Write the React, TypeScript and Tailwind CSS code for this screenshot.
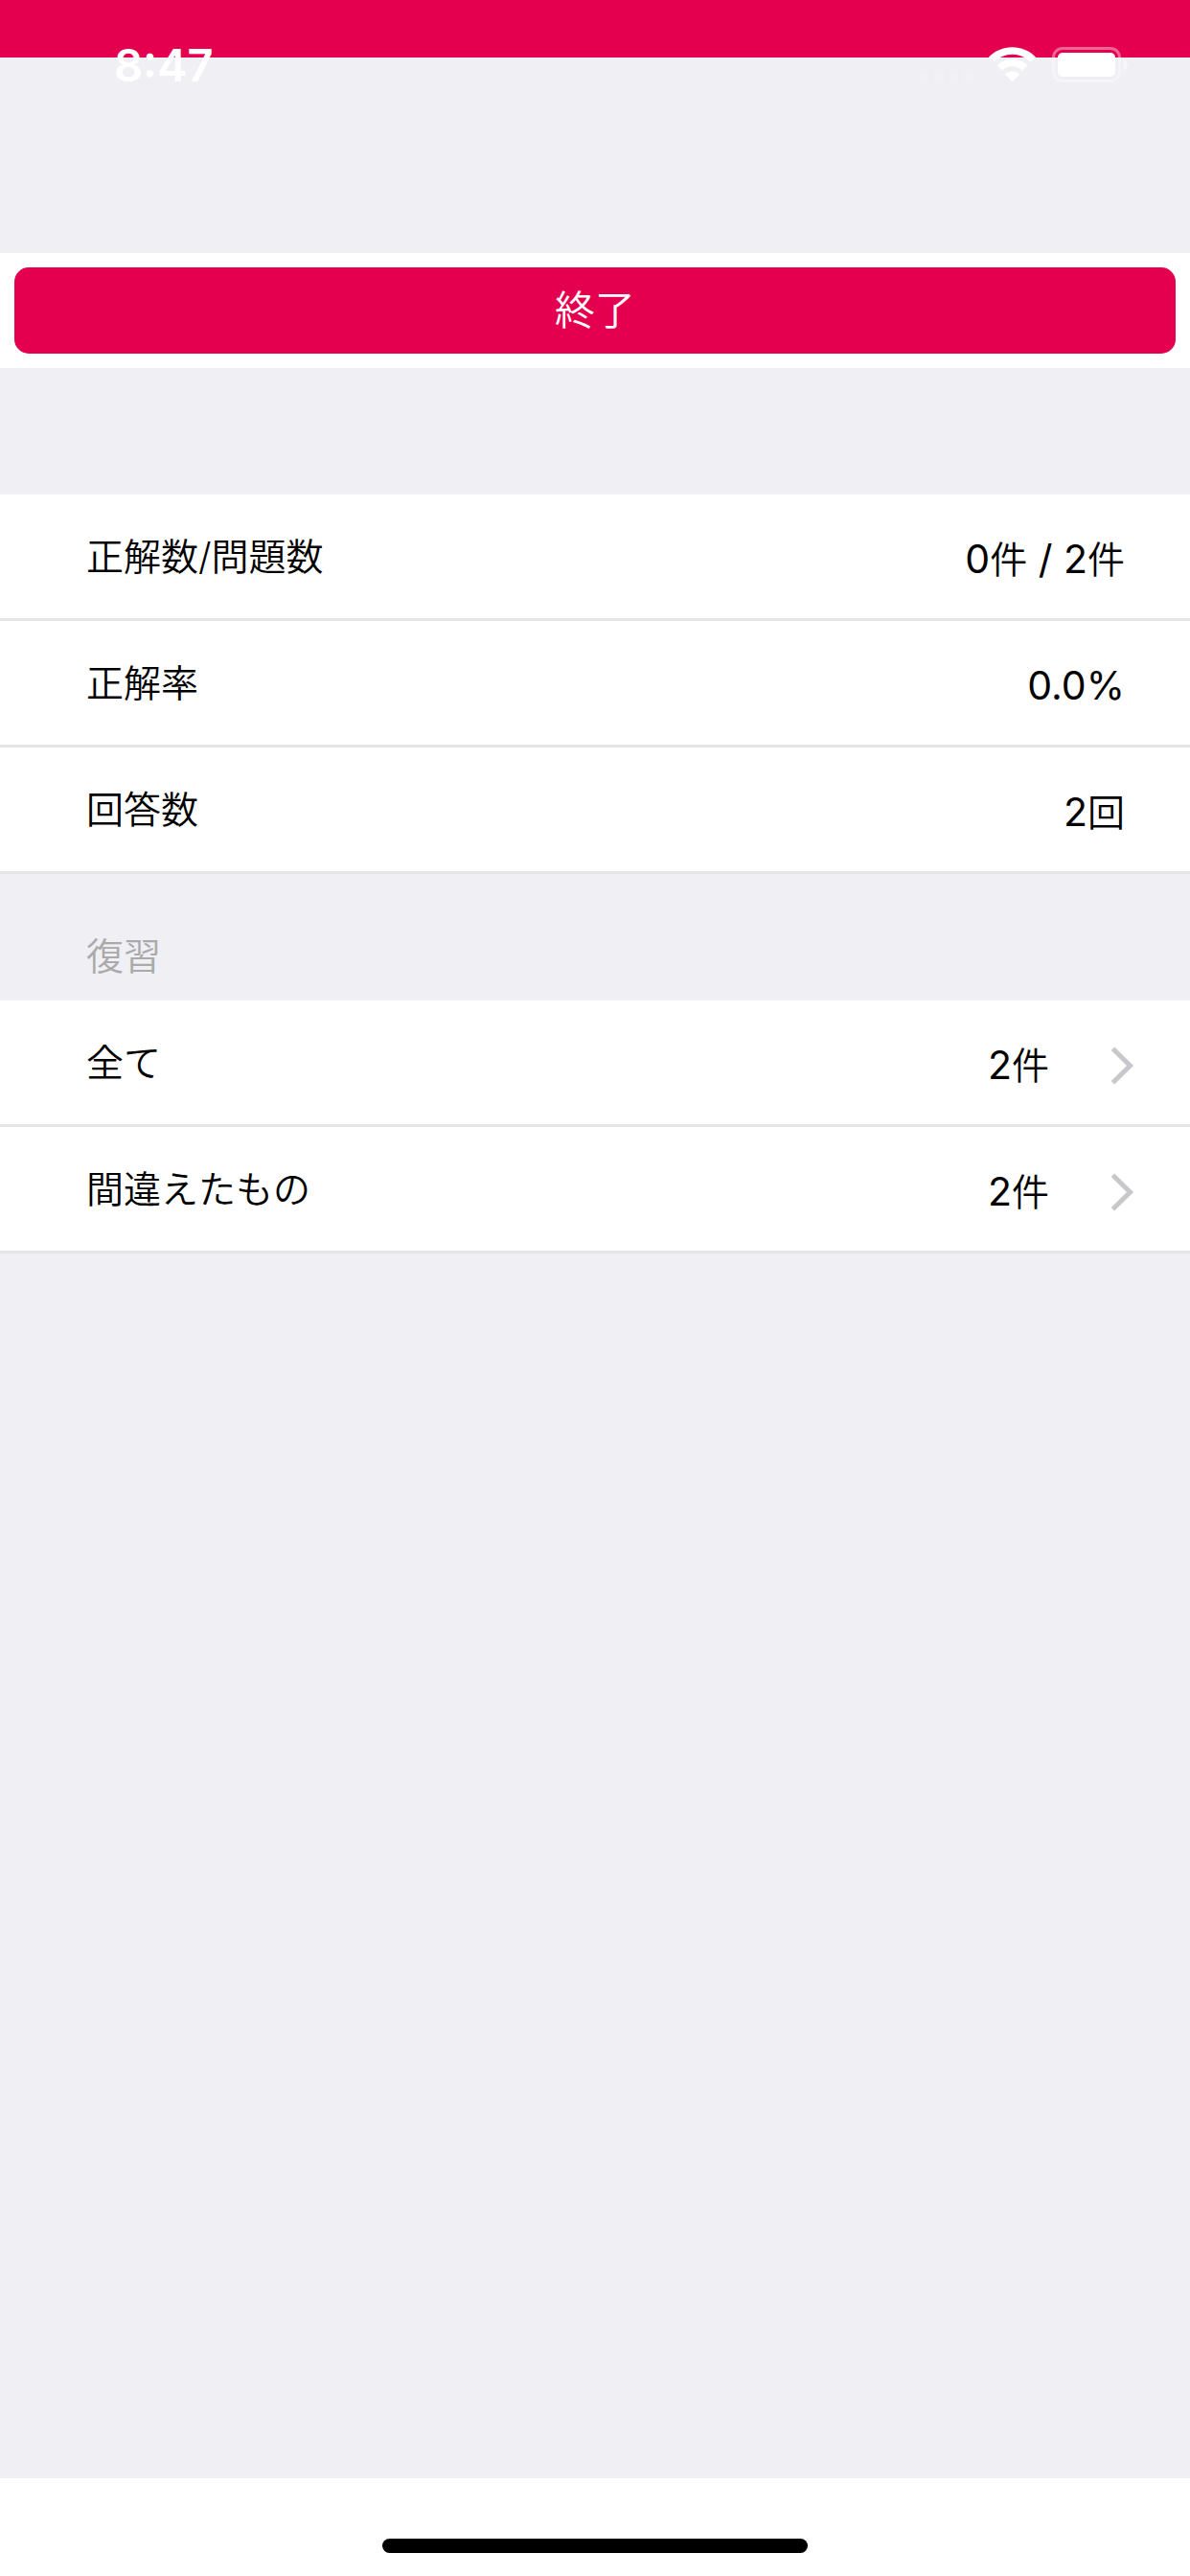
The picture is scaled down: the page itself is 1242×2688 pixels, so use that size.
import type { ReactNode } from "react";

const stats = [
  { label: "正解数/問題数", value: <><Num>0</Num>件<Num> / 2</Num>件</> },
  { label: "正解率", value: <Num>0.0%</Num> },
  { label: "回答数", value: <><Num>2</Num>回</> },
];

const reviews = [
  { label: "全て", count: 2 },
  { label: "間違えたもの", count: 2 },
];

function Num({ children }: { children: ReactNode }) {
  return <span className="text-[41px] font-normal whitespace-pre">{children}</span>;
}

function StatusBar() {
  return (
    <div className="absolute inset-x-0 top-0 flex h-[132px] items-start justify-between pt-10 pr-[64px] pl-[119px] text-white">
      <span className="text-[47px] leading-[56px] font-semibold">8:47</span>
      <div className="flex pt-2">
        <svg className="mt-[26px] h-[12px] w-[60px]" viewBox="0 0 60 12" fill="currentColor" fillOpacity="0.2" aria-hidden="true">
          <rect x="1" y="1" width="10" height="10" rx="3" />
          <rect x="16" y="1" width="10" height="10" rx="3" />
          <rect x="31" y="1" width="10" height="10" rx="3" />
          <rect x="46" y="1" width="10" height="10" rx="3" />
        </svg>
        <svg className="ml-3 h-[38px] w-[51px]" viewBox="0 0 51 38" fill="currentColor" aria-label="Wi-Fi" role="img">
          <path d="M1 11.4C7.6 4.9 16.200 1.200 25.500 1.200S43.400 4.900 50 11.400L44.600 16.800C39.500 11.800 32.800 8.800 25.500 8.800S11.500 11.800 6.400 16.800Z" />
          <path d="M9.600 20.200C13.800 16.100 19.400 13.700 25.500 13.700S37.200 16.100 41.400 20.200L36 25.600C33.200 22.900 29.500 21.300 25.500 21.300S17.800 22.900 15 25.600Z" />
          <path d="M18.400 29C20.200 27.200 22.700 26.200 25.500 26.200S30.800 27.200 32.600 29C33 29.400 33 29.900 32.600 30.300L26.200 36.700C25.800 37.100 25.200 37.100 24.800 36.700L18.400 30.300C18 29.900 18 29.400 18.400 29Z" />
        </svg>
        <svg className="ml-4 h-[40px] w-[80px]" viewBox="0 0 80 40" fill="none" aria-label="Battery" role="img">
          <rect x="1.500" y="2.500" width="69" height="34" rx="9.500" stroke="currentColor" strokeOpacity="0.4" strokeWidth="3" />
          <rect x="6" y="7" width="60" height="25" rx="5" fill="currentColor" />
          <path d="M74 13.500C77.600 15 79 17 79 19.600S77.600 24.500 74 26Z" fill="currentColor" fillOpacity="0.45" />
        </svg>
      </div>
    </div>
  );
}

function Chevron() {
  return (
    <svg className="mt-[6px] ml-[64px] h-[40px] w-[26px]" viewBox="0 0 26 40" fill="none" stroke="#c7c7cc" strokeWidth="5" aria-hidden="true">
      <path d="M2.500 2.300 20.500 20 2.500 37.700" />
    </svg>
  );
}

export default function App() {
  return (
    <div className="relative flex min-h-screen flex-col bg-[#efeff4] font-['Inter','Noto_Sans_CJK_JP',sans-serif] text-[39px] leading-[48px] font-[350] text-black" lang="ja">
      <header className="h-[60px] bg-[#e5004f]" />
      <StatusBar />
      <main className="flex grow flex-col pt-[204px]">
        <div className="bg-white p-[15px]">
          <button type="button" className="h-[90px] w-full rounded-[15px] bg-[#e5004f] text-[42px] text-white">
            終了
          </button>
        </div>

        <dl className="mt-[132px]">
          {stats.map(({ label, value }) => (
            <div key={label} className="flex h-[132px] items-center justify-between border-b-[3px] border-[#e5e5e5] bg-white pr-[68px] pl-[90px]">
              <dt>{label}</dt>
              <dd className="pt-[6px]">{value}</dd>
            </div>
          ))}
        </dl>

        <section>
          <h2 className="flex h-[132px] items-end pb-[22px] pl-[90px] font-[350] text-[#aaaaaa]">復習</h2>
          <ul>
            {reviews.map(({ label, count }) => (
              <li key={label}>
                <button type="button" className="flex h-[132px] w-full items-center border-b-[3px] border-[#e5e5e5] bg-white pr-[57px] pl-[90px] text-left">
                  <span className="grow">{label}</span>
                  <span className="pt-[6px]"><Num>{count}</Num>件</span>
                  <Chevron />
                </button>
              </li>
            ))}
          </ul>
        </section>
      </main>
      <footer className="flex h-[102px] items-end justify-center bg-white pb-6">
        <div className="h-[15px] w-[444px] rounded-full bg-black" />
      </footer>
    </div>
  );
}
